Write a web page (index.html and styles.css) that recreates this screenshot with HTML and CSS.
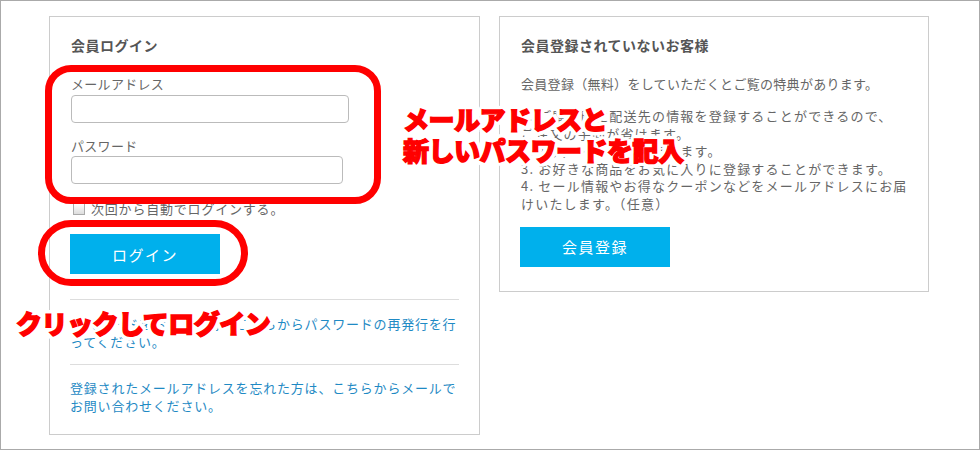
FILE: index.html
```html
<!DOCTYPE html>
<html lang="ja">
<head>
  <meta charset="UTF-8">
  <title>ログイン</title>
  <link rel="stylesheet" href="styles.css">
</head>
<body>

  <div class="frame">
    <div class="panel login">
      <h2>会員ログイン</h2>
      <label class="label">メールアドレス</label>
      <input type="text" class="field field-mail">
      <label class="label label-pw">パスワード</label>
      <input type="password" class="field field-pw">
      <div class="remember"><span class="check"></span>次回から自動でログインする。</div>
      <button class="btn">ログイン</button>
      <hr>
      <p class="link">パスワードをお忘れの方はこちらからパスワードの再発行を行<br>ってください。</p>
      <hr class="hr2">
      <p class="link link2">登録されたメールアドレスを忘れた方は、こちらからメールで<br>お問い合わせください。</p>
    </div>

    <div class="panel guest">
      <h2>会員登録されていないお客様</h2>
      <p class="intro">会員登録（無料）をしていただくとご覧の特典があります。</p>
      <ol class="perks">
        <li>1. ご購入時に配送先の情報を登録することができるので、<br>ご注文の手間が省けます。</li>
        <li>2. 購入ポイントが貯まります。</li>
        <li>3. お好きな商品をお気に入りに登録することができます。</li>
        <li>4. セール情報やお得なクーポンなどをメールアドレスにお届<br>けいたします。（任意）</li>
      </ol>
      <button class="btn btn-reg">会員登録</button>
    </div>

    <!-- 注釈 -->
    <div class="mark mark-form"></div>
    <div class="mark mark-btn"></div>
    <div class="note note-form">メールアドレスと<br>新しいパスワードを記入</div>
    <div class="note note-btn">クリックしてログイン</div>
  </div>

</body>
</html>
```

FILE: styles.css
```css
body {
  margin: 0;
  background: #fff;
  font-family: "Noto Sans CJK JP", "Noto Sans", sans-serif;
  font-size: 13px;
  color: #666;
}

.frame {
  position: relative;
  box-sizing: border-box;
  width: 980px;
  height: 450px;
  border: 1px solid #aaa;
  padding: 15px 0 0 48px;
  display: flex;
  align-items: flex-start;
  gap: 19px;
}

.panel {
  box-sizing: border-box;
  border: 1px solid #ccc;
  padding: 18px 20px 19px;
  display: flex;
  flex-direction: column;
  align-items: flex-start;
}

.login {
  width: 431px;
}

.guest {
  width: 430px;
  padding-bottom: 24px;
}

h2 {
  margin: 0 0 0 1px;
  font-size: 14px;
  line-height: 20px;
  font-weight: bold;
  color: #555;
  letter-spacing: 0.5px;
}

.label {
  margin: 20px 0 0 1px;
  line-height: 18px;
  letter-spacing: 0.3px;
}

.label-pw {
  margin-top: 14px;
}

.field {
  box-sizing: border-box;
  height: 28px;
  margin: 2px 0 0 1px;
  border: 1px solid #bbb;
  border-radius: 4px;
  background: #fff;
}

.field-mail {
  width: 278px;
}

.field-pw {
  width: 272px;
  margin-top: 1px;
}

.remember {
  display: flex;
  align-items: center;
  gap: 6px;
  margin: 16px 0 0 3px;
  line-height: 18px;
  letter-spacing: 0.8px;
}

.check {
  width: 10px;
  height: 10px;
  border: 1px solid #aaa;
  background: linear-gradient(#fff, #ddd);
}

.btn {
  width: 150px;
  height: 40px;
  margin-top: 16px;
  border: none;
  background: #00b0ec;
  color: #fff;
  font-family: inherit;
  font-size: 15px;
  letter-spacing: 1.5px;
}

.login hr {
  align-self: stretch;
  margin: 25px 0 0;
  border: none;
  border-top: 1px solid #ddd;
}

.login .hr2 {
  margin-top: 13px;
}

.link {
  margin: 15px 0 0;
  line-height: 18px;
  color: #1f8ac4;
  letter-spacing: 0.8px;
}

.link2 {
  margin-top: 14px;
}

.intro {
  margin: 20px 0 0 1px;
  line-height: 18px;
  letter-spacing: 0.3px;
}

.perks {
  list-style: none;
  margin: 14px 0 0 1px;
  padding: 0;
  line-height: 17.6px;
  letter-spacing: 1.2px;
}

.btn-reg {
  margin-top: 14px;
}

.mark {
  position: absolute;
  box-sizing: border-box;
  border: 7px solid #f00;
}

.mark-form {
  left: 44px;
  top: 64px;
  width: 336px;
  height: 139px;
  border-radius: 26px;
}

.mark-btn {
  left: 37px;
  top: 219px;
  width: 210px;
  height: 66px;
  border-radius: 33px;
}

.note {
  position: absolute;
  color: #f00;
  font-size: 26px;
  font-weight: 900;
  line-height: 31px;
  letter-spacing: -0.5px;
  white-space: nowrap;
  -webkit-text-stroke: 1.4px #f00;
  text-shadow:
    4px 0 #fff, -4px 0 #fff, 0 4px #fff, 0 -4px #fff,
    3px 3px #fff, -3px -3px #fff, 3px -3px #fff, -3px 3px #fff,
    4px 2px #fff, -4px 2px #fff, 4px -2px #fff, -4px -2px #fff,
    2px 4px #fff, -2px 4px #fff, 2px -4px #fff, -2px -4px #fff,
    0 0 3px #fff;
}

.note-form {
  left: 402px;
  top: 102px;
}

.note-btn {
  left: 15px;
  top: 306px;
}
```
